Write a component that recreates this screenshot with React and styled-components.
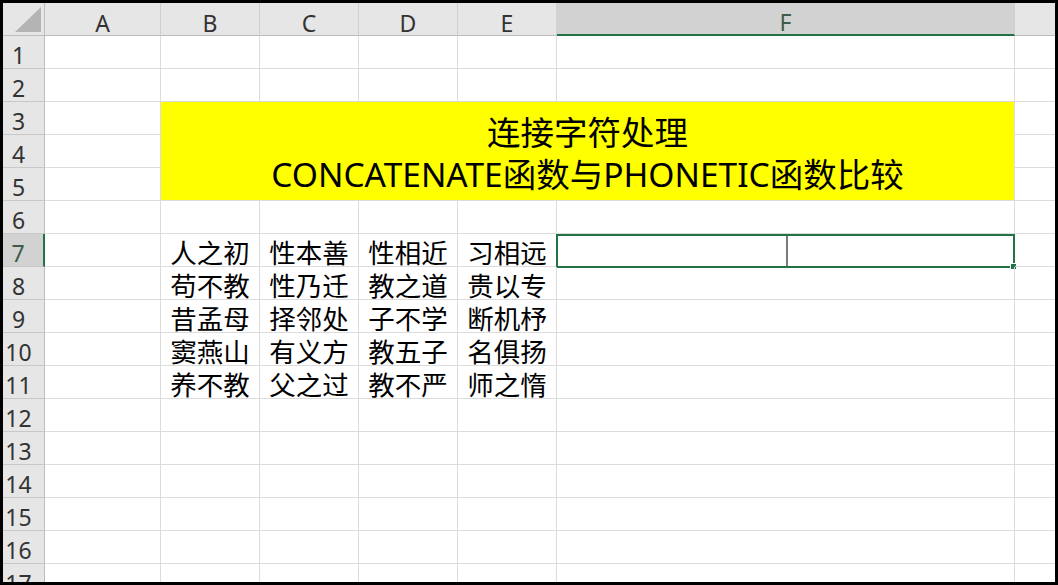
import React from 'react'
import styled, { createGlobalStyle } from 'styled-components'

const COLS = ['A', 'B', 'C', 'D', 'E', 'F', '']
const WIDTHS = [116, 99, 99, 99, 99, 458, 60]
const ROWS = 17

const poem = [
    ['人之初', '性本善', '性相近', '习相远'],
    ['苟不教', '性乃迁', '教之道', '贵以专'],
    ['昔孟母', '择邻处', '子不学', '断机杼'],
    ['窦燕山', '有义方', '教五子', '名俱扬'],
    ['养不教', '父之过', '教不严', '师之惰'],
]

const App = () => {
    const cells = []
    for (let r = 1; r <= ROWS; r++) {
        cells.push(<RowHeader key={'h' + r} $active={r === 7}>{r}</RowHeader>)
        COLS.forEach((c, ci) => {
            // merged banner B3:F5
            if (r >= 3 && r <= 5 && ci >= 1 && ci <= 5) {
                if (r === 3 && ci === 1) {
                    cells.push(
                        <Banner key="banner">
                            <div>连接字符处理</div>
                            <div>CONCATENATE函数与PHONETIC函数比较</div>
                        </Banner>
                    )
                }
                return
            }
            const text = r >= 7 && r <= 11 && ci >= 1 && ci <= 4 ? poem[r - 7][ci - 1] : ''
            const selected = r === 7 && c === 'F'
            cells.push(
                <Cell key={ci + '-' + r}>
                    {text}
                    {selected && <Selection><Handle /></Selection>}
                </Cell>
            )
        })
    }

    return (
        <>
            <GlobalStyle />
            <Sheet>
                <Corner><CornerMark /></Corner>
                {COLS.map((c, i) => (
                    <ColHeader key={i} $active={c === 'F'}>{c}</ColHeader>
                ))}
                {cells}
            </Sheet>
        </>
    )
}

export default App

//Componentes
const GlobalStyle = createGlobalStyle`
    html, body {
        margin:0;
        padding:0;
        background:#000;
        overflow:hidden;
    }
`

const Sheet = styled.div`
    margin:3px;
    width:1052px;
    height:579px;
    overflow:hidden;
    background:#fff;
    display:grid;
    grid-template-columns:42px ${WIDTHS.map(w => w + 'px').join(' ')};
    grid-auto-rows:33px;
`

const Corner = styled.div`
    position:relative;
    background:#e6e6e6;
    border-right:1px solid #bdbdbd;
    border-bottom:1px solid #bdbdbd;
`

const CornerMark = styled.div`
    position:absolute;
    right:3px;
    bottom:3px;
    width:0;
    height:0;
    border-left:26px solid transparent;
    border-bottom:25px solid #b4b4b4;
`

const ColHeader = styled.div`
    display:flex;
    align-items:center;
    justify-content:center;
    padding-top:7px;
    background:${p => (p.$active ? '#d2d2d2' : '#e6e6e6')};
    border-right:1px solid #d0d0d0;
    border-bottom:${p => (p.$active ? '2px solid #217346' : '1px solid #bdbdbd')};
    font-family:"Noto Sans", sans-serif;
    font-size:23px;
    color:${p => (p.$active ? '#3d5c4b' : '#333')};
`

const RowHeader = styled.div`
    display:flex;
    align-items:center;
    justify-content:center;
    padding-right:10px;
    padding-top:5px;
    background:${p => (p.$active ? '#d2d2d2' : '#e6e6e6')};
    border-right:${p => (p.$active ? '2px solid #217346' : '1px solid #bdbdbd')};
    border-bottom:1px solid #c8c8c8;
    font-family:"Noto Sans", sans-serif;
    font-size:23px;
    color:${p => (p.$active ? '#3d5c4b' : '#333')};
`

const Cell = styled.div`
    position:relative;
    display:flex;
    align-items:flex-end;
    justify-content:center;
    padding-bottom:1px;
    border-right:1px solid #dcdcdc;
    border-bottom:1px solid #dcdcdc;
    font-family:"Noto Sans CJK SC", sans-serif;
    font-size:26.5px;
    line-height:1;
    color:#000;
    white-space:nowrap;
`

const Banner = styled.div`
    grid-column:span 5;
    grid-row:span 3;
    background:#ffff00;
    border-right:1px solid #dcdcdc;
    border-bottom:1px solid #dcdcdc;
    display:flex;
    flex-direction:column;
    align-items:center;
    justify-content:center;
    padding-top:4px;
    font-family:"Noto Sans", "Noto Sans CJK SC", sans-serif;
    font-size:33.5px;
    line-height:42px;
    color:#000;
`

const Selection = styled.div`
    position:absolute;
    top:0;
    left:-1px;
    right:-1px;
    bottom:-2px;
    border:2px solid #217346;

    &:before{
        content:"";
        position:absolute;
        top:0;
        bottom:0;
        left:50%;
        width:2px;
        background:#7a7a7a;
    }
`

const Handle = styled.div`
    position:absolute;
    right:-4px;
    bottom:-4px;
    width:5px;
    height:5px;
    background:#217346;
    border:1px solid #fff;
`
